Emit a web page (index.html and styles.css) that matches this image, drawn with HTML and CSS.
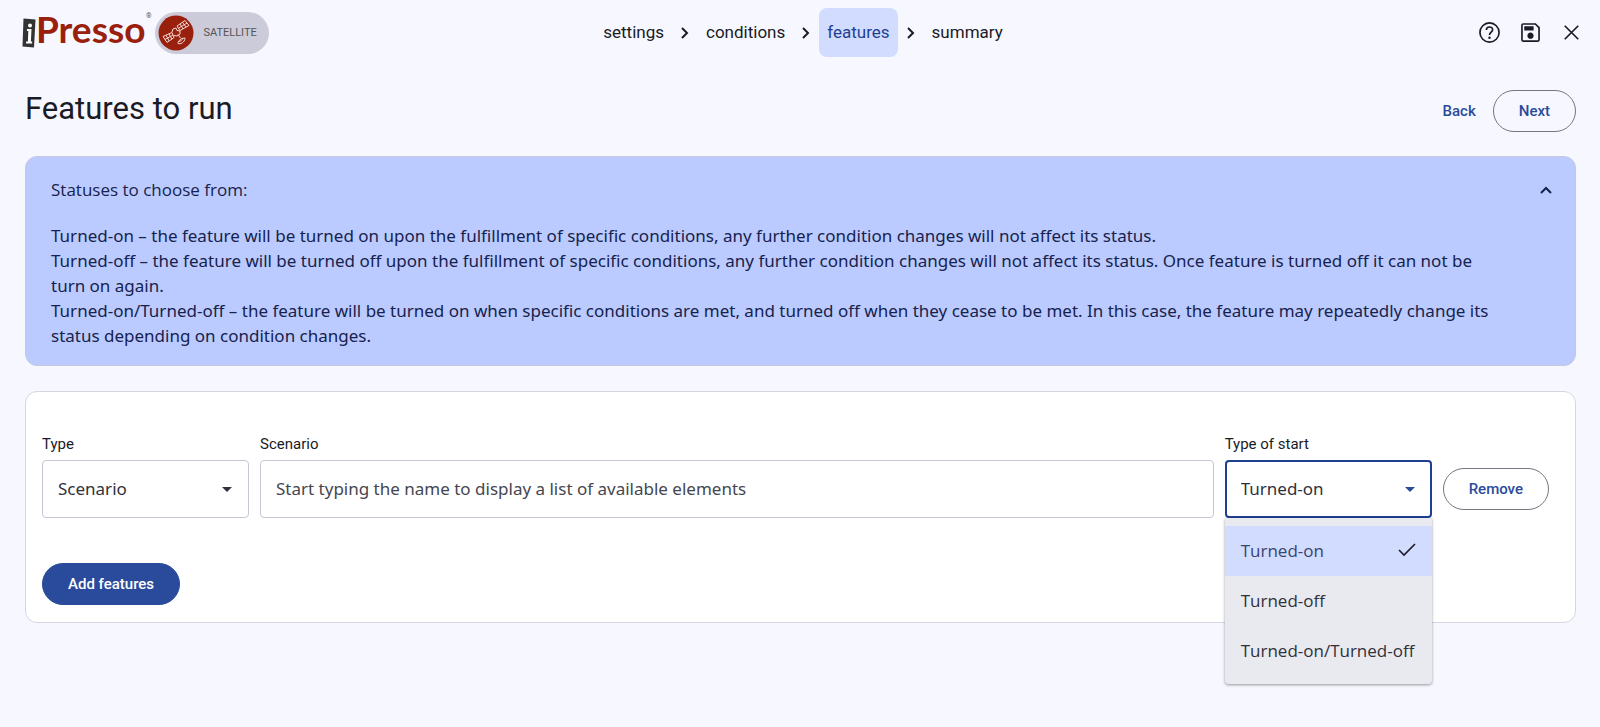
FILE: index.html
```html
<!DOCTYPE html>
<html lang="en">
<head>
  <meta charset="utf-8">
  <title>Features to run</title>
  <link rel="stylesheet" href="styles.css">
</head>
<body>
<header class="topbar">
  <div class="brand">
    <a class="logo" href="#">
      <svg class="logo-mark" viewBox="0 0 14 30" width="14" height="30" aria-hidden="true">
        <path d="M1.500 .5 13.500 1.500 12 29.500 .5 28.500z" fill="#333"/>
        <path d="M5 11h4.500l-.6 12.500h1.300l-.1 2H4l.1-2h1.800l.4-10.500H4.900z" fill="#fff"/>
        <circle cx="8" cy="7.500" r="2" fill="#fff"/>
      </svg>
      <span class="logo-text">Presso</span><sup class="logo-reg">®</sup>
    </a>
    <a class="product" href="#">
      <svg viewBox="0 0 36 36" width="36" height="36" aria-hidden="true">
        <circle cx="18" cy="18" r="17.500" fill="#9a200e"/>
        <g fill="none" stroke="#f3d9d4" stroke-width="1">
          <path d="M5 21.500l9-4 2 5-7 5z M8 20.200l3.200 5.800 M11 18.800l2.800 5.400 M7 24.500l8-4.500"/>
          <path d="M19 11l8-5.500 4 5-9 5z M22 9l3.200 5 M24.500 7.300l3.500 4.800 M20.500 13.200l8.500-5.200"/>
          <path d="M14 17l1-3 3-1 1 2.500 3 .5 0 3-3 2-3-.5"/>
          <path d="M20 19.500l2.500 3.500"/>
          <path d="M20 28.500c2 1 7-1 7-5.500 M20.500 26.500c2 0 4-1.500 4.500-3.500 M20 28.500c0-3 3-5.500 7-5.500"/>
        </g>
      </svg>
      SATELLITE
    </a>
  </div>

  <nav class="steps">
    <a href="#">settings</a>
    <svg class="arrow" viewBox="0 0 10 14" width="10" height="14"><path d="M2 2l5 5-5 5"/></svg>
    <a href="#">conditions</a>
    <svg class="arrow" viewBox="0 0 10 14" width="10" height="14"><path d="M2 2l5 5-5 5"/></svg>
    <a href="#" class="active" aria-current="step">features</a>
    <svg class="arrow" viewBox="0 0 10 14" width="10" height="14"><path d="M2 2l5 5-5 5"/></svg>
    <a href="#">summary</a>
  </nav>

  <div class="tools">
    <button type="button" aria-label="Help">
      <svg viewBox="0 0 24 24"><path d="M12 2a10 10 0 1 0 0 20 10 10 0 0 0 0-20zm0 18.400a8.400 8.400 0 1 1 0-16.800 8.400 8.400 0 0 1 0 16.800z"/><path class="line" d="M9 9.600C9 5.800 15 5.800 15 9.300c0 2.200-3 2.600-3 5.200"/><circle cx="12" cy="17" r="1.200"/></svg>
    </button>
    <button type="button" aria-label="Save">
      <svg viewBox="0 0 24 24"><path d="M17 3H5c-1.110 0-2 .9-2 2v14c0 1.100.89 2 2 2h14c1.100 0 2-.9 2-2V7l-4-4zm2.400 16.400H4.600V4.600h11.700L19.400 7.700V19.400zm-7.400-7.400c-1.660 0-3 1.340-3 3s1.340 3 3 3 3-1.340 3-3-1.340-3-3-3zM6 6h9v4H6z"/></svg>
    </button>
    <button type="button" aria-label="Close">
      <svg viewBox="0 0 24 24"><path class="line" d="M5.500 5.500l13 13M18.500 5.500l-13 13"/></svg>
    </button>
  </div>
</header>

<main>
  <div class="heading">
    <h1>Features to run</h1>
    <button type="button" class="btn btn-text">Back</button>
    <button type="button" class="btn">Next</button>
  </div>

  <section class="info">
    <div class="info-head">
      <h2>Statuses to choose from:</h2>
      <button type="button" aria-label="Collapse" aria-expanded="true">
        <svg viewBox="0 0 14 14" width="14" height="14"><path d="M2 10l5-5 5 5"/></svg>
      </button>
    </div>
    <p>Turned-on – the feature will be turned on upon the fulfillment of specific conditions, any further condition changes will not affect its status.</p>
    <p>Turned-off – the feature will be turned off upon the fulfillment of specific conditions, any further condition changes will not affect its status. Once feature is turned off it can not be turn on again.</p>
    <p>Turned-on/Turned-off – the feature will be turned on when specific conditions are met, and turned off when they cease to be met. In this case, the feature may repeatedly change its status depending on condition changes.</p>
  </section>

  <form class="features">
    <div class="row">
      <div class="field">
        <label for="type">Type</label>
        <div class="select">
          <select id="type"><option>Scenario</option></select>
        </div>
      </div>
      <div class="field">
        <label for="scenario">Scenario</label>
        <input id="scenario" type="text" placeholder="Start typing the name to display a list of available elements">
      </div>
      <div class="field">
        <label for="start">Type of start</label>
        <div class="select open">
          <select id="start">
            <option>Turned-on</option>
            <option>Turned-off</option>
            <option>Turned-on/Turned-off</option>
          </select>
          <ul class="menu" role="listbox" aria-label="Type of start">
            <li role="option" aria-selected="true">Turned-on
              <svg viewBox="0 0 18 14" width="18" height="14"><path d="M1 7l5 5L17 1"/></svg>
            </li>
            <li role="option">Turned-off</li>
            <li role="option">Turned-on/Turned-off</li>
          </ul>
        </div>
      </div>
      <button type="button" class="btn remove">Remove</button>
    </div>
    <button type="button" class="btn btn-primary">Add features</button>
  </form>
</main>
</body>
</html>
```
FILE: styles.css
```css
* {
  box-sizing: border-box;
}
body {
  margin: 0;
  min-height: 100vh;
  background: #f7f7ff;
  color: #1a1b25;
  font: 17px/25px Roboto, "Open Sans", sans-serif;
}
a {
  color: inherit;
  text-decoration: none;
}
button, input, select {
  font: inherit;
  color: inherit;
}
button {
  padding: 0;
  border: 0;
  background: none;
  cursor: pointer;
}
svg {
  display: block;
}

/* top bar */
.topbar {
  display: grid;
  grid-template-columns: 1fr auto 1fr;
  align-items: center;
  padding: 8px 16px 8px 22px;
}
.brand {
  display: flex;
  align-items: center;
  gap: 10px;
}
.logo {
  position: relative;
  display: flex;
  align-items: center;
  height: 42px;
  color: #9a200e;
}
.logo-text {
  padding-bottom: 8px;
  font: 700 37px/38px Lato, sans-serif;
}
.logo-reg {
  position: absolute;
  top: 0;
  right: -6px;
  color: #555;
  font-size: 7px;
  line-height: 8px;
}
.product {
  display: flex;
  align-items: center;
  gap: 9px;
  height: 42px;
  padding: 0 12px 0 3px;
  border-radius: 21px;
  background: #cccbda;
  color: #555;
  font-size: 11px;
}
.steps {
  display: flex;
  align-items: center;
  gap: 8px;
}
.steps a {
  padding: 12px 8px;
  border-radius: 8px;
}
.steps .active {
  background: #d2dcff;
  color: #1f3f93;
}
.arrow {
  fill: none;
  stroke: #1a1b25;
  stroke-width: 2;
}
.tools {
  display: flex;
  justify-content: flex-end;
  gap: 16px;
}
.tools svg {
  width: 25px;
  height: 25px;
  fill: #1a1b25;
}
.tools .line {
  fill: none;
  stroke: #1a1b25;
  stroke-width: 1.6;
}

/* page heading */
main {
  padding: 25px 24px 40px 25px;
}
.heading {
  display: flex;
  align-items: center;
  margin-bottom: 24px;
}
h1 {
  flex: 1;
  margin: 0;
  padding-bottom: 4px;
  font-size: 31px;
  font-weight: 400;
  line-height: 38px;
}
.btn {
  height: 42px;
  padding: 0 25px;
  border: 1px solid #777680;
  border-radius: 21px;
  color: #2a4b9b;
  font-size: 15px;
  font-weight: 500;
}
.btn-text {
  padding: 0 17px;
  border: 0;
}
.btn-primary {
  border-color: #2a4b9b;
  background: #2a4b9b;
  color: #fff;
}

/* status description */
.info {
  margin-bottom: 25px;
  padding: 20px 22px 17px 25px;
  border: 1px solid #c6c9de;
  border-radius: 12px;
  background: #bbcbff;
  color: #16224d;
}
.info-head {
  display: flex;
  justify-content: space-between;
  align-items: center;
  margin-bottom: 21px;
}
h2 {
  margin: 0;
  font: 500 17px/25px "Open Sans", sans-serif;
}
.info-head svg {
  fill: none;
  stroke: #16224d;
  stroke-width: 2;
}
.info p {
  margin: 0 50px 0 0;
  font-family: "Noto Sans", sans-serif;
}

/* feature rows */
.features {
  padding: 40px 26px 17px 16px;
  border: 1px solid #d5d6e4;
  border-radius: 12px;
  background: #fff;
}
.row {
  display: grid;
  grid-template-columns: 207px 1fr 207px auto;
  gap: 11px;
  margin-bottom: 45px;
}
.field label {
  display: block;
  margin-bottom: 3px;
  font-size: 15px;
}
.field input, .field select {
  display: block;
  width: 100%;
  height: 58px;
  padding: 0 15px 2px;
  border: 1px solid #c6c7d6;
  border-radius: 4px;
  outline: 0;
  background: #fff;
  font-family: "Noto Sans", sans-serif;
  appearance: none;
}
.field input::placeholder {
  color: #45464f;
  opacity: 1;
}
.select {
  position: relative;
  color: #30313b;
}
.select::after {
  content: "";
  position: absolute;
  top: 27px;
  right: 17px;
  border: 5px solid transparent;
  border-top-color: currentColor;
  border-bottom: 0;
  pointer-events: none;
}
.select.open::after {
  color: #2a4b9b;
}
.select.open select {
  padding: 0 14px 2px;
  border: 2px solid #1f3f93;
}
.menu {
  position: absolute;
  top: 100%;
  left: 0;
  right: 0;
  margin: 0;
  padding: 8px 0;
  border-radius: 0 0 4px 4px;
  background: #e9eaef;
  box-shadow: 0 1px 3px rgba(0, 0, 0, .4);
  font-family: "Open Sans", sans-serif;
  list-style: none;
}
.menu li {
  display: flex;
  justify-content: space-between;
  align-items: center;
  height: 50px;
  padding: 0 16px 2px;
  white-space: nowrap;
}
.menu li[aria-selected] {
  background: #d2dcff;
  color: #37456f;
}
.menu svg {
  fill: none;
  stroke: #1a1b25;
  stroke-width: 1.6;
}
.remove {
  align-self: end;
  margin-bottom: 8px;
}
```
